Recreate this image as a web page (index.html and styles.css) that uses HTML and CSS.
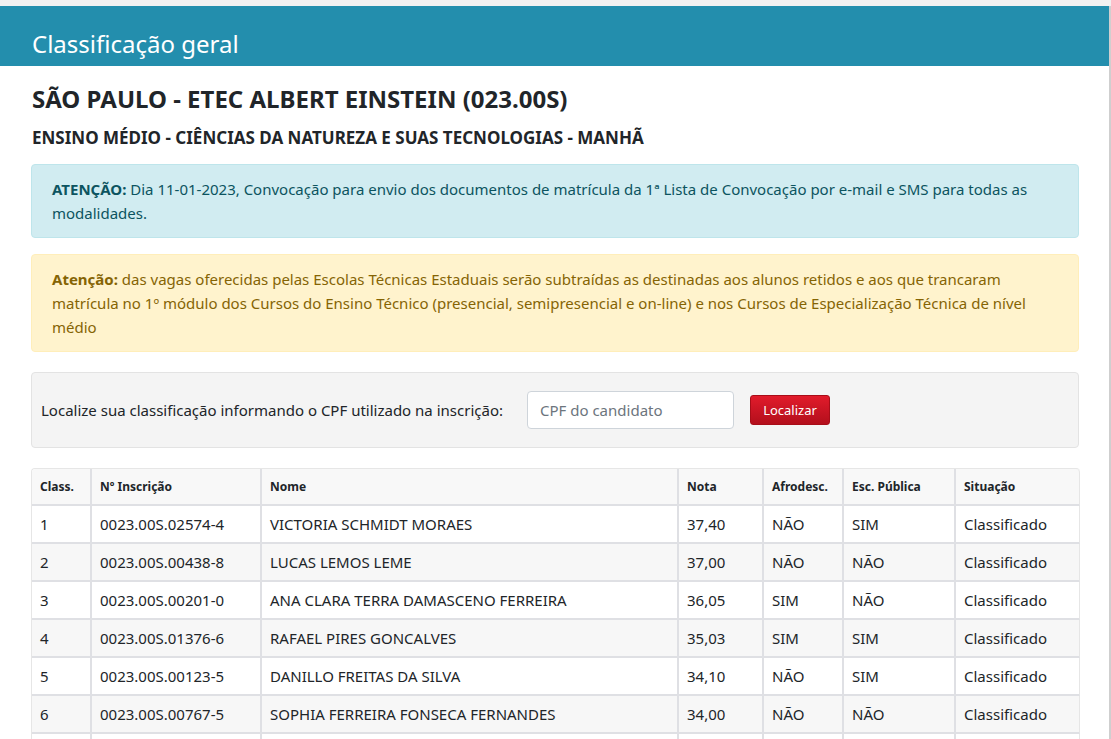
FILE: index.html
```html
<!DOCTYPE html>
<html lang="pt-BR">
<head>
<meta charset="utf-8">
<title>Classificação geral</title>
<link rel="stylesheet" href="styles.css">
</head>
<body>
<div class="topstrip"></div>
<div class="page">
  <header class="banner"><span class="banner-title">Classificação geral</span></header>
  <main class="content">
    <h1 class="school">SÃO PAULO - ETEC ALBERT EINSTEIN (023.00S)</h1>
    <h2 class="course">ENSINO MÉDIO - CIÊNCIAS DA NATUREZA E SUAS TECNOLOGIAS - MANHÃ</h2>
    <div class="alert alert-info"><b>ATENÇÃO:</b> Dia 11-01-2023, Convocação para envio dos documentos de matrícula da 1ª Lista de Convocação por e-mail e SMS para todas as modalidades.</div>
    <div class="alert alert-warning"><b>Atenção:</b> das vagas oferecidas pelas Escolas Técnicas Estaduais serão subtraídas as destinadas aos alunos retidos e aos que trancaram matrícula no 1º módulo dos Cursos do Ensino Técnico (presencial, semipresencial e on-line) e nos Cursos de Especialização Técnica de nível médio</div>
    <div class="search">
      <label class="search-label" for="cpf">Localize sua classificação informando o CPF utilizado na inscrição:</label>
      <input class="search-input" id="cpf" type="text" placeholder="CPF do candidato">
      <button class="search-btn" type="button">Localizar</button>
    </div>
    <table class="grid">
      <colgroup>
        <col class="c1"><col class="c2"><col class="c3"><col class="c4"><col class="c5"><col class="c6"><col class="c7">
      </colgroup>
      <thead>
        <tr><th>Class.</th><th>Nº Inscrição</th><th>Nome</th><th>Nota</th><th>Afrodesc.</th><th>Esc. Pública</th><th>Situação</th></tr>
      </thead>
      <tbody>
        <tr><td>1</td><td>0023.00S.02574-4</td><td>VICTORIA SCHMIDT MORAES</td><td>37,40</td><td>NÃO</td><td>SIM</td><td>Classificado</td></tr>
        <tr><td>2</td><td>0023.00S.00438-8</td><td>LUCAS LEMOS LEME</td><td>37,00</td><td>NÃO</td><td>NÃO</td><td>Classificado</td></tr>
        <tr><td>3</td><td>0023.00S.00201-0</td><td>ANA CLARA TERRA DAMASCENO FERREIRA</td><td>36,05</td><td>SIM</td><td>NÃO</td><td>Classificado</td></tr>
        <tr><td>4</td><td>0023.00S.01376-6</td><td>RAFAEL PIRES GONCALVES</td><td>35,03</td><td>SIM</td><td>SIM</td><td>Classificado</td></tr>
        <tr><td>5</td><td>0023.00S.00123-5</td><td>DANILLO FREITAS DA SILVA</td><td>34,10</td><td>NÃO</td><td>SIM</td><td>Classificado</td></tr>
        <tr><td>6</td><td>0023.00S.00767-5</td><td>SOPHIA FERREIRA FONSECA FERNANDES</td><td>34,00</td><td>NÃO</td><td>NÃO</td><td>Classificado</td></tr>
        <tr><td>7</td><td>0023.00S.00310-2</td><td>GABRIEL SANTOS OLIVEIRA</td><td>33,85</td><td>NÃO</td><td>SIM</td><td>Classificado</td></tr>
      </tbody>
    </table>
  </main>
</div>
</body>
</html>
```
FILE: styles.css
```css
html, body {
  margin: 0;
  padding: 0;
  background: #ffffff;
}
body {
  font-family: "Noto Sans", "Open Sans", sans-serif;
  font-size: 15px;
  line-height: 24px;
  color: #212529;
  overflow: hidden;
}
.topstrip {
  height: 6px;
  background: #f1f1f1;
}
.page {
  border-right: 2px solid #cfcfcf;
  min-height: 733px;
}
.banner {
  height: 60px;
  background: #238ead;
  display: flex;
  align-items: flex-end;
  padding: 0 0 7px 32px;
  box-sizing: border-box;
}
.banner-title {
  color: #ffffff;
  font-size: 24px;
  line-height: 30px;
  font-weight: 400;
}
.content {
  padding: 17px 30px 0 31px;
}
.school {
  margin: 0 0 0 1px;
  font-size: 24px;
  line-height: 32px;
  font-weight: 700;
  color: #212529;
}
.course {
  margin: 11px 0 14px 1px;
  font-size: 17px;
  line-height: 24px;
  font-weight: 700;
  color: #212529;
}
.alert {
  border: 1px solid transparent;
  border-radius: 4px;
  padding: 12px 20px;
  margin-bottom: 16px;
}
.alert b { font-weight: 700; }
.alert-info {
  background: #d1ecf1;
  border-color: #bee5eb;
  color: #0c5460;
}
.alert-warning {
  background: #fff3cd;
  border-color: #ffeeba;
  color: #856404;
}
.search {
  margin-top: 20px;
  background: #f4f4f4;
  border: 1px solid #e3e3e3;
  border-radius: 4px;
  height: 76px;
  box-sizing: border-box;
  display: flex;
  align-items: center;
  padding: 0 9px;
}
.search-label {
  margin-right: 24px;
}
.search-input {
  width: 207px;
  height: 38px;
  box-sizing: border-box;
  border: 1px solid #ced4da;
  border-radius: 4px;
  padding: 0 12px;
  font-family: inherit;
  font-size: 15px;
  color: #495057;
  background: #ffffff;
}
.search-input::placeholder { color: #6c757d; }
.search-btn {
  margin-left: 16px;
  height: 30px;
  width: 80px;
  border: 1px solid #a80d18;
  border-radius: 3px;
  background: linear-gradient(#e11b2b, #b30f1c);
  color: #ffffff;
  font-family: inherit;
  font-size: 13px;
  padding: 0;
}
.grid {
  margin-top: 20px;
  width: 1048px;
  table-layout: fixed;
  border-collapse: separate;
  border-spacing: 0;
  border-top: 1px solid #e6e6e6;
  border-left: 1px solid #e6e6e6;
  border-radius: 4px 4px 0 0;
}
.c1 { width: 60px; }
.c2 { width: 170px; }
.c3 { width: 417px; }
.c4 { width: 85px; }
.c5 { width: 80px; }
.c6 { width: 112px; }
.c7 { width: 124px; }
.grid th, .grid td {
  text-align: left;
  padding: 6px 8px;
  border-right: 2px solid #dfe0e4;
  border-bottom: 2px solid #dfe0e4;
  white-space: nowrap;
  overflow: hidden;
}
.grid th:last-child, .grid td:last-child { border-right: 1px solid #e6e6e6; }
.grid th {
  font-size: 12px;
  font-weight: 700;
  background: #f8f8f8;
  height: 23px;
  line-height: 23px;
}
.grid thead th:first-child { border-top-left-radius: 4px; }
.grid thead th:last-child { border-top-right-radius: 4px; }
.grid td {
  font-size: 15px;
  height: 24px;
}
.grid tbody tr:nth-child(even) td { background: #f7f7f7; }
```
